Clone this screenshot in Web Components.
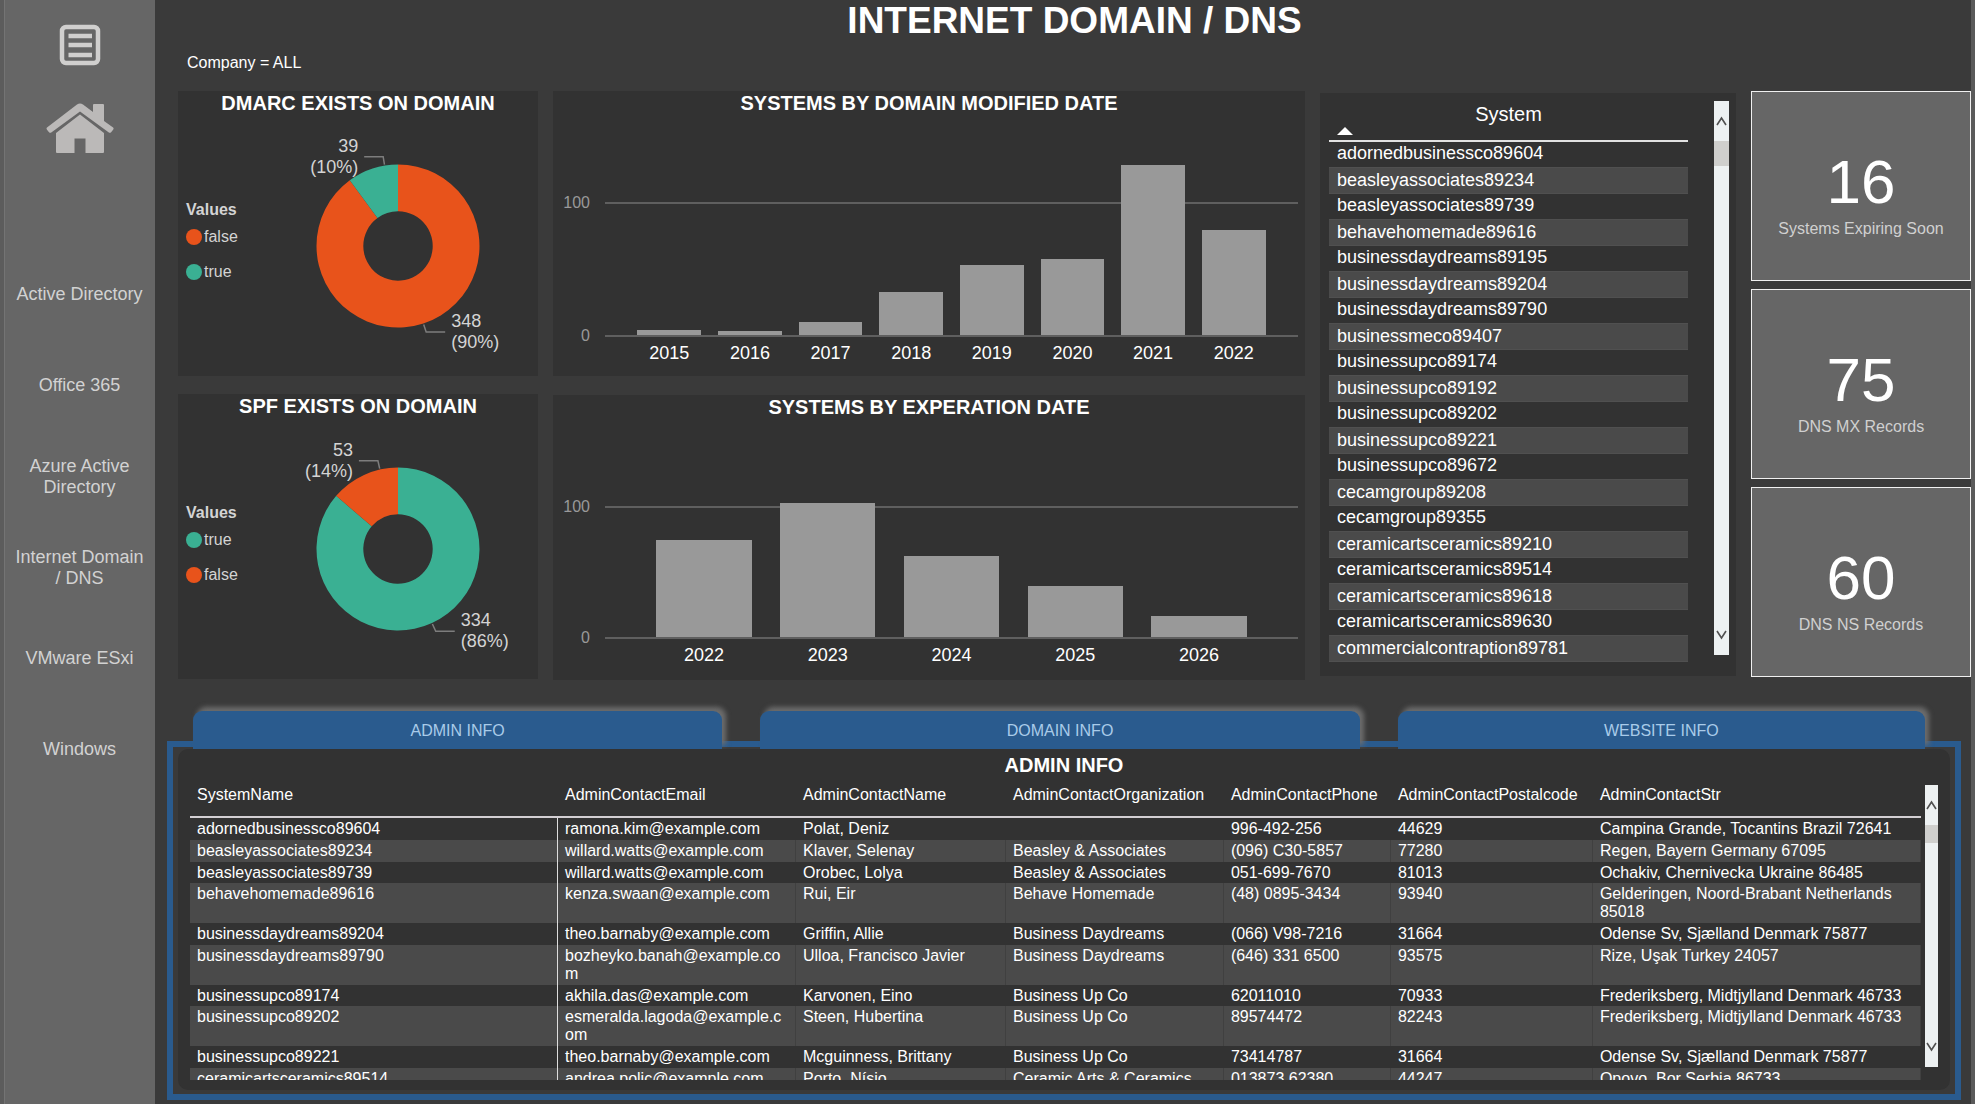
<!DOCTYPE html>
<html lang="en">
<head>
<meta charset="utf-8">
<title>Internet Domain / DNS</title>
<style>
  html, body { margin: 0; min-height: 100%; background: #3a3a3a; }
  body { font-family: "Liberation Sans", Arial, sans-serif; color: #fff; }
</style>
</head>
<body>
<domain-dashboard></domain-dashboard>
<script>
const define = (name, render) => customElements.define(name, class extends HTMLElement {
  connectedCallback() {
    if (this.shadowRoot) return;
    const root = this.attachShadow({ mode: "open" });
    root.innerHTML = render(this);
  }
});
const BASE = `*{box-sizing:border-box}h1,h2,h3,p,ul,dl,dd,figure{margin:0;padding:0}ul{list-style:none}`;

/* Navigation */
define("side-nav", () => `
<style>${BASE}
  :host{display:flex;flex-direction:column;align-items:stretch;background:#666;border-left:4px solid #5c5c5c;box-shadow:inset 1px 0 #747474}
  .icons{display:flex;flex-direction:column;align-items:center;gap:37px;padding-top:24px;height:249px}
  button{border:0;background:none;padding:0;display:block;cursor:pointer}
  svg{display:block}
  a{display:flex;align-items:center;justify-content:center;height:91px;padding:0 8px;text-align:center;font-size:18px;line-height:21px;color:#d2d2d2;text-decoration:none}
</style>
<div class="icons">
  <button aria-label="Report menu"><svg width="42" height="42" viewBox="0 0 42 42"><rect x="3" y="3" width="36" height="36" rx="4" fill="none" stroke="#d0cfce" stroke-width="4.5"/><path d="M9.500 12h23.500M9.500 21h23.500M9.500 31h23.500" stroke="#d0cfce" stroke-width="4.600"/></svg></button>
  <button aria-label="Home"><svg width="68" height="51" viewBox="0 0 68 51"><path fill="#bbb9b8" d="M10 30 34 11.500l24 18.500V49q0 1-1 1H39.500V35.500h-11V50H11q-1 0-1-1z"/><path fill="#bbb9b8" d="M34 0.500q-1.500 0-3 1L1 24.500q-1 1 0 2.200l2 2.500q1.300 1 2.600 0L34 8.500 62.500 29.200q1.300 1 2.600 0l2-2.500q1-1.200 0-2.200L58 18V2q0-1-1-1h-9q-1 0-1 1v7L37 1.500q-1.500-1-3-1z"/></svg></button>
</div>
<nav>
  <a href="#ad">Active Directory</a><a href="#o365">Office 365</a><a href="#aad">Azure Active Directory</a>
  <a href="#dns">Internet Domain / DNS</a><a href="#esxi">VMware ESxi</a><a href="#windows">Windows</a>
</nav>`);

/* Titled chart panel */
define("chart-panel", el => `
<style>${BASE}
  :host{display:flex;flex-direction:column;height:285px;background:#323232}
  h2{font-size:20px;line-height:24px;text-align:center}
  ::slotted(*){flex:1}
</style><h2>${el.getAttribute("heading")}</h2><slot></slot>`);

const COLOR = { "true": "#3ab093", "false": "#e8531b" };

/* Two-slice donut: attributes big/small are "name,count,percent" */
define("donut-chart", el => {
  const [bn, bv, bp] = el.getAttribute("big").split(",");
  const [sn, sv, sp] = el.getAttribute("small").split(",");
  const cx = 120, cy = 131, R = 81.5, r = 34.7;
  const a = -2 * Math.PI * sv / (+sv + +bv);
  const at = (rad, ang) => (cx + rad * Math.sin(ang)).toFixed(2) + " " + (cy - rad * Math.cos(ang)).toFixed(2);
  const slice = (from, to, large) => `M${at(R, from)}A${R} ${R} 0 ${large} 1 ${at(R, to)}L${at(r, to)}A${r} ${r} 0 ${large} 0 ${at(r, from)}Z`;
  const lead = (ang, dir) => {
    const x = cx + (R + 1) * Math.sin(ang), y = cy - (R + 1) * Math.cos(ang);
    const kx = cx + (R + 9) * Math.sin(ang), ky = cy - (R + 9) * Math.cos(ang);
    return { d: `M${x} ${y}L${kx} ${ky}h${dir * 19}`, x: kx + dir * 25, y: ky };
  };
  const s = lead(a * 0.26, -1), b = lead(Math.PI + a / 2, 1);
  return `
<style>${BASE}
  :host{display:flex}
  .legend{padding:85px 0 0 8px;width:80px;flex:none}
  h3,li{font-size:16px;color:#d4d4d4}
  h3{line-height:20px}
  li{display:flex;align-items:center;gap:2px;line-height:20px;margin-top:7px}
  li + li{margin-top:15px}
  i{width:16px;height:16px;border-radius:50%}
  svg{flex:1;min-width:0;height:261px}
  text{font-size:18px;fill:#d4d4d4}
</style>
<div class="legend"><h3>Values</h3><ul>
<li><i style="background:${COLOR[bn]}"></i>${bn}</li><li><i style="background:${COLOR[sn]}"></i>${sn}</li></ul></div>
<svg viewBox="-20 0 280 261" role="img" aria-label="${bn} ${bv}, ${sn} ${sv}">
  <path fill="${COLOR[bn]}" d="${slice(0, 2 * Math.PI + a, 1)}"/><path fill="${COLOR[sn]}" d="${slice(a, 0, 0)}"/>
  <path d="${s.d}${b.d}" fill="none" stroke="#7d7d7d" stroke-width="1.500"/>
  <text text-anchor="end" x="${s.x}" y="${s.y - 5}">${sv}</text><text text-anchor="end" x="${s.x}" y="${s.y + 16}">(${sp})</text>
  <text x="${b.x}" y="${b.y - 5}">${bv}</text><text x="${b.x}" y="${b.y + 16}">(${bp})</text>
</svg>`;
});

/* Column chart: attribute data is "label:value,..." */
define("bar-chart", el => {
  const data = el.getAttribute("data").split(",").map(p => p.split(":"));
  return `
<style>${BASE}
  :host{display:grid;grid-template-columns:37px 1fr;column-gap:15px;grid-template-rows:${el.getAttribute("rise")}px auto;padding-right:7px;--step:${el.getAttribute("step")}px}
  .y{display:flex;flex-direction:column;justify-content:flex-end;gap:calc(var(--step) - 20px);margin-bottom:-9px;text-align:right;font-size:16px;line-height:20px;color:#999}
  .plot,.x{display:flex;padding:0 ${el.getAttribute("pad")}}
  .plot{align-items:flex-end;background:linear-gradient(#5f5f5f,#5f5f5f) 0 calc(100% - var(--step) + 2px)/100% 2px no-repeat;border-bottom:2px solid #5f5f5f}
  .plot div{flex:1;display:flex;justify-content:center}
  i{width:${el.getAttribute("bar")};height:calc(var(--v) * var(--step) / 100);background:#999}
  .x{grid-column:2;padding-top:6px;font-size:18px;line-height:21px}
  .x span{flex:1;text-align:center}
</style>
<div class="y"><span>100</span><span>0</span></div>
<div class="plot">${data.map(d => `<div><i style="--v:${d[1]}"></i></div>`).join("")}</div>
<div class="x">${data.map(d => `<span>${d[0]}</span>`).join("")}</div>`;
});

define("scroll-rail", () => `
<style>${BASE}
  :host{display:flex;flex-direction:column;align-items:center;background:#edf1f2;width:15px}
  svg{display:block;margin:14px 0}
  i{align-self:stretch;height:var(--thumb,25px);background:#cfcfcd}
  b{flex:1}
</style>
<svg width="11" height="12" viewBox="0 0 11 12"><path d="M1 10 5.500 3 10 10" fill="none" stroke="#505050" stroke-width="1.600"/></svg><i></i><b></b>
<svg width="11" height="12" viewBox="0 0 11 12"><path d="M1 2 5.500 9 10 2" fill="none" stroke="#505050" stroke-width="1.600"/></svg>`);

define("system-list", () => {
  const names = "adornedbusinessco89604 beasleyassociates89234 beasleyassociates89739 behavehomemade89616 businessdaydreams89195 businessdaydreams89204 businessdaydreams89790 businessmeco89407 businessupco89174 businessupco89192 businessupco89202 businessupco89221 businessupco89672 cecamgroup89208 cecamgroup89355 ceramicartsceramics89210 ceramicartsceramics89514 ceramicartsceramics89618 ceramicartsceramics89630 commercialcontraption89781".split(" ");
  return `
<style>${BASE}
  :host{display:flex;justify-content:space-between;align-items:flex-start;background:#323232;height:583px;margin-top:2px;padding:8px 7px 0 9px}
  table{border-collapse:separate;border-spacing:0;width:359px}
  th{font-size:20px;font-weight:400;line-height:24px;height:41px;padding:1px 8px 5px;border-bottom:2px solid #e2e2e2}
  th svg{display:block;margin-top:1px}
  td{font-size:18px;line-height:22px;padding:0 8px 3px}
  tr:nth-child(even) td{background:#4a4a4a;border:solid #505050;border-width:1px 0;padding:1px 8px 2px}
  scroll-rail{height:554px}
</style>
<table><thead><tr><th scope="col" aria-sort="ascending">System<svg width="16" height="8" viewBox="0 0 16 8"><path d="M0 8 8 0l8 8z" fill="#fff"/></svg></th></tr></thead>
<tbody>${names.map(n => `<tr><td>${n}</td></tr>`).join("")}</tbody></table><scroll-rail></scroll-rail>`;
});

define("stat-card", el => `
<style>${BASE}
  :host{display:flex;flex-direction:column;align-items:center;height:190px;padding-top:55px;background:#666;border:1px solid #f0f0f0}
  strong{font-size:62px;line-height:70px;font-weight:400}
  span{font-size:16px;line-height:20px;margin-top:2px;color:#d0d0d0}
</style><strong>${el.getAttribute("value")}</strong><span><slot></slot></span>`);

define("info-tabs", () => `
<style>${BASE}
  :host{display:grid;grid-template-columns:529fr 599fr 527fr;column-gap:38px;padding:0 36px 0 26px;margin-bottom:-8px;position:relative}
  button{height:38px;border:0;border-radius:9px 9px 0 0;background:#2a5b8e;color:#a9cbe9;font:16px/20px "Liberation Sans",Arial,sans-serif;padding:2px 0 0;box-shadow:4px -4px 5px #6d6d6d;clip-path:inset(-14px -14px 0 -14px);cursor:pointer}
</style>
<button>ADMIN INFO</button><button>DOMAIN INFO</button><button>WEBSITE INFO</button>`);

define("admin-table", () => {
  const heads = ["SystemName", "AdminContactEmail", "AdminContactName", "AdminContactOrganization", "AdminContactPhone", "AdminContactPostalcode", "AdminContactStr"];
  const rows = [
    ["adornedbusinessco89604", "ramona.kim@example.com", "Polat, Deniz", "", "996-492-256", "44629", "Campina Grande, Tocantins Brazil 72641"],
    ["beasleyassociates89234", "willard.watts@example.com", "Klaver, Selenay", "Beasley &amp; Associates", "(096) C30-5857", "77280", "Regen, Bayern Germany 67095"],
    ["beasleyassociates89739", "willard.watts@example.com", "Orobec, Lolya", "Beasley &amp; Associates", "051-699-7670", "81013", "Ochakiv, Chernivecka Ukraine 86485"],
    ["behavehomemade89616", "kenza.swaan@example.com", "Rui, Eir", "Behave Homemade", "(48) 0895-3434", "93940", "Gelderingen, Noord-Brabant Netherlands 85018"],
    ["businessdaydreams89204", "theo.barnaby@example.com", "Griffin, Allie", "Business Daydreams", "(066) V98-7216", "31664", "Odense Sv, Sjælland Denmark 75877"],
    ["businessdaydreams89790", "bozheyko.banah@example.co<br>m", "Ulloa, Francisco Javier", "Business Daydreams", "(646) 331 6500", "93575", "Rize, Uşak Turkey 24057"],
    ["businessupco89174", "akhila.das@example.com", "Karvonen, Eino", "Business Up Co", "62011010", "70933", "Frederiksberg, Midtjylland Denmark 46733"],
    ["businessupco89202", "esmeralda.lagoda@example.c<br>om", "Steen, Hubertina", "Business Up Co", "89574472", "82243", "Frederiksberg, Midtjylland Denmark 46733"],
    ["businessupco89221", "theo.barnaby@example.com", "Mcguinness, Brittany", "Business Up Co", "73414787", "31664", "Odense Sv, Sjælland Denmark 75877"],
    ["ceramicartsceramics89514", "andrea.polic@example.com", "Porto, Nísio", "Ceramic Arts &amp; Ceramics", "013873 62380", "44247", "Opovo, Bor Serbia 86733"]
  ];
  const widths = [368, 238, 210, 218, 167, 202, 328];
  return `
<style>${BASE}
  :host{display:block;border:6px solid #2a5b8e;padding:2px 5px 4px}
  section{background:#323232;border-radius:10px;padding:4px 12px 10px;height:341px}
  h2{font-size:20px;line-height:24px;text-align:center}
  .body{display:flex;gap:4px;align-items:flex-start;margin-top:8px}
  .view{flex:1;height:295px;overflow:hidden}
  table{width:100%;border-collapse:separate;border-spacing:0;table-layout:fixed}
  th{height:33px;padding:1px 7px 0;text-align:left;vertical-align:top;font-size:16px;line-height:18px;font-weight:400;border-bottom:2px solid #d3cfd3;white-space:nowrap}
  td{font-size:16px;line-height:18px;padding:2px 7px;vertical-align:top}
  tbody tr:nth-child(4n+3) td{padding-bottom:1px}
  tbody tr:nth-child(even) td{background:#4a4a4a;box-shadow:inset -1px 0 #404040}
  td:last-child{padding-right:0}
  tbody tr td:first-child,tbody tr:nth-child(even) td:first-child{box-shadow:inset -1px 0 #ddd}
  scroll-rail{width:13px;height:282px;--thumb:18px}
</style>
<section><h2>ADMIN INFO</h2><div class="body"><div class="view"><table>
<colgroup>${widths.map(w => `<col style="width:${(w / 17.31).toFixed(2)}%">`).join("")}</colgroup>
<thead><tr>${heads.map(h => `<th scope="col">${h}</th>`).join("")}</tr></thead>
<tbody>${rows.map(r => `<tr>${r.map(c => `<td>${c}</td>`).join("")}</tr>`).join("")}</tbody></table></div><scroll-rail></scroll-rail></div></section>`;
});

define("domain-dashboard", () => `
<style>${BASE}
  :host{display:grid;grid-template-columns:155px 1fr;min-height:100vh;border-right:4px solid #5a5a5a}
  header{padding-left:23px}
  h1{font-size:37px;line-height:42px;text-align:center}
  header p{font-size:16px;line-height:18px;margin:12px 0 19px 9px}
  .grid{display:grid;grid-template-columns:360fr 752fr 416fr 220fr;gap:15px;align-items:start;padding-left:23px;height:620px}
  .col{display:flex;flex-direction:column;gap:18px}
  .col.mid{gap:19px}
  .col.cards{gap:8px}
  .info{padding:0 10px 4px 12px}
</style>
<side-nav></side-nav>
<main>
  <header><h1>INTERNET DOMAIN / DNS</h1><p>Company = ALL</p></header>
  <div class="grid">
    <div class="col">
      <chart-panel heading="DMARC EXISTS ON DOMAIN"><donut-chart big="false,348,90%" small="true,39,10%"></donut-chart></chart-panel>
      <chart-panel heading="SPF EXISTS ON DOMAIN"><donut-chart big="true,334,86%" small="false,53,14%"></donut-chart></chart-panel>
    </div>
    <div class="col mid">
      <chart-panel heading="SYSTEMS BY DOMAIN MODIFIED DATE"><bar-chart rise="222" step="133" pad="24px" bar="79%" data="2015:4,2016:3,2017:10,2018:32,2019:53,2020:57,2021:128,2022:79"></bar-chart></chart-panel>
      <chart-panel heading="SYSTEMS BY EXPERATION DATE"><bar-chart rise="220" step="131" pad="37px" bar="77%" data="2022:74,2023:102,2024:62,2025:39,2026:16"></bar-chart></chart-panel>
    </div>
    <system-list></system-list>
    <div class="col cards">
      <stat-card value="16">Systems Expiring Soon</stat-card>
      <stat-card value="75">DNS MX Records</stat-card>
      <stat-card value="60">DNS NS Records</stat-card>
    </div>
  </div>
  <div class="info"><info-tabs></info-tabs><admin-table></admin-table></div>
</main>`);
</script>
</body>
</html>
